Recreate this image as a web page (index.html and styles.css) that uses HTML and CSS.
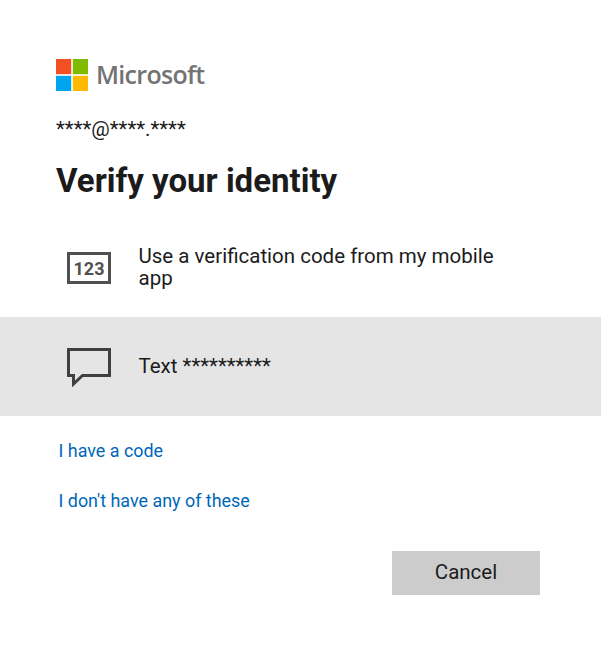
FILE: index.html
```html
<!DOCTYPE html>
<html lang="en">

<head>
    <title>Verify your identity</title>
    <link rel="stylesheet" href="styles.css">
</head>

<body>
    <div id="container">
        <div class="logo">
            <svg class="logoMark" width="32" height="32" viewBox="0 0 32 32">
                <rect x="0" y="0" width="15.2" height="15.2" fill="#f25022"></rect>
                <rect x="16.8" y="0" width="15.2" height="15.2" fill="#7fba00"></rect>
                <rect x="0" y="16.8" width="15.2" height="15.2" fill="#00a4ef"></rect>
                <rect x="16.8" y="16.8" width="15.2" height="15.2" fill="#ffb900"></rect>
            </svg>
            <span class="logoText">Microsoft</span>
        </div>
        <div class="account">****@****.****</div>
        <h1 class="title">Verify your identity</h1>
        <div class="options">
            <div class="option">
                <svg class="optionIcon" width="44" height="33" viewBox="0 0 44 33">
                    <rect x="1.5" y="2.5" width="41" height="29" fill="none" stroke="#505050" stroke-width="3"></rect>
                    <text x="22" y="24" text-anchor="middle" class="iconText">123</text>
                </svg>
                <div class="optionText">Use a verification code from my mobile app</div>
            </div>
            <div class="option selected">
                <svg class="optionIcon" width="44" height="41" viewBox="0 0 44 41">
                    <path d="M1.5 3.5H42.5V29.5H15.5L6.5 38V29.5H1.5Z" fill="none" stroke="#404040" stroke-width="3"></path>
                </svg>
                <div class="optionText">Text **********</div>
            </div>
        </div>
        <div class="links">
            <a href="#" class="link">I have a code</a>
            <a href="#" class="link">I don't have any of these</a>
        </div>
        <div class="buttons">
            <button type="button" class="cancel">Cancel</button>
        </div>
    </div>
</body>

</html>
```

FILE: styles.css
```css
html,
body {
    margin: 0;
    padding: 0;
    background-color: white;
}

#container {
    padding-top: 59px;
    font-family: Roboto, 'Liberation Sans', sans-serif;
    color: #1b1b1b;
}

.logo {
    display: flex;
    align-items: center;
    height: 32px;
    padding-left: 56px;
}

.logoMark {
    display: block;
}

.logoText {
    margin-left: 8px;
    padding-bottom: 2px;
    font-family: 'Open Sans', sans-serif;
    font-size: 25px;
    font-weight: 600;
    letter-spacing: -0.7px;
    color: #737373;
}

.account {
    margin-top: 26px;
    padding-left: 56px;
    font-size: 20.5px;
    line-height: 24px;
}

.title {
    margin: 20px 0 0;
    padding-left: 56px;
    font-size: 33px;
    font-weight: 700;
    line-height: 40px;
}

.options {
    margin-top: 17px;
}

.option {
    display: flex;
    align-items: center;
    height: 99px;
    padding-left: 67px;
}

.selected {
    background-color: #e5e5e5;
}

.optionIcon {
    flex-shrink: 0;
    display: block;
}

.iconText {
    font-family: Roboto, sans-serif;
    font-size: 18px;
    font-weight: 700;
    fill: #505050;
}

.optionText {
    margin-left: 27.5px;
    margin-right: 90px;
    margin-bottom: 2px;
    font-size: 20.5px;
    line-height: 22px;
}

.links {
    display: flex;
    flex-direction: column;
    align-items: flex-start;
    gap: 26px;
    margin-top: 23px;
    padding-left: 58.5px;
}

.link {
    font-size: 17.9px;
    line-height: 24px;
    color: #0067b8;
    text-decoration: none;
}

.buttons {
    display: flex;
    justify-content: flex-end;
    margin-top: 38px;
    padding-right: 61px;
}

.cancel {
    width: 148px;
    height: 44px;
    padding-bottom: 3px;
    border: none;
    background-color: #cccccc;
    font-family: Roboto, 'Liberation Sans', sans-serif;
    font-size: 20.5px;
    color: #1b1b1b;
}
```
